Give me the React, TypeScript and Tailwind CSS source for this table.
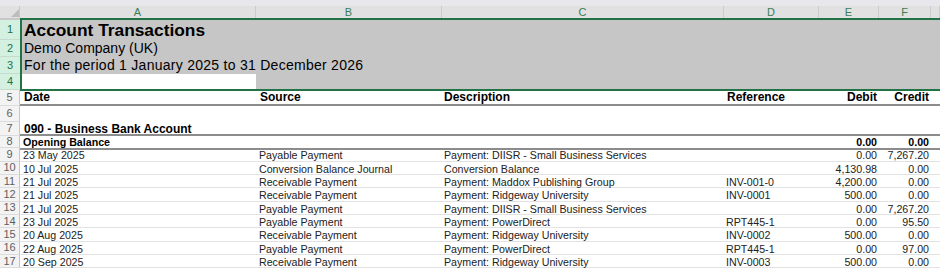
type Txn = {
  date: string;
  source: string;
  desc: string;
  ref: string;
  debit: string;
  credit: string;
};

const txns: Txn[] = [
  { date: '23 May 2025', source: 'Payable Payment', desc: 'Payment: DIISR - Small Business Services', ref: '', debit: '0.00', credit: '7,267.20' },
  { date: '10 Jul 2025', source: 'Conversion Balance Journal', desc: 'Conversion Balance', ref: '', debit: '4,130.98', credit: '0.00' },
  { date: '21 Jul 2025', source: 'Receivable Payment', desc: 'Payment: Maddox Publishing Group', ref: 'INV-001-0', debit: '4,200.00', credit: '0.00' },
  { date: '21 Jul 2025', source: 'Receivable Payment', desc: 'Payment: Ridgeway University', ref: 'INV-0001', debit: '500.00', credit: '0.00' },
  { date: '21 Jul 2025', source: 'Payable Payment', desc: 'Payment: DIISR - Small Business Services', ref: '', debit: '0.00', credit: '7,267.20' },
  { date: '23 Jul 2025', source: 'Payable Payment', desc: 'Payment: PowerDirect', ref: 'RPT445-1', debit: '0.00', credit: '95.50' },
  { date: '20 Aug 2025', source: 'Receivable Payment', desc: 'Payment: Ridgeway University', ref: 'INV-0002', debit: '500.00', credit: '0.00' },
  { date: '22 Aug 2025', source: 'Payable Payment', desc: 'Payment: PowerDirect', ref: 'RPT445-1', debit: '0.00', credit: '97.00' },
  { date: '20 Sep 2025', source: 'Receivable Payment', desc: 'Payment: Ridgeway University', ref: 'INV-0003', debit: '500.00', credit: '0.00' },
];

const letters = ['A', 'B', 'C', 'D', 'E', 'F', ''];

function RowHead({ n, sel }: { n: number; sel?: boolean }) {
  return (
    <div
      className={
        sel
          ? 'w-[20px] shrink-0 flex items-center justify-center bg-[#d3f0e0] text-[#217346] border-b border-[#c3dccb] text-[11px] leading-none'
          : 'w-[20px] shrink-0 flex items-center justify-center bg-[#f3f3f3] text-[#5f5f5f] border-b border-r border-[#dcdcdc] border-r-[#c6c6c6] text-[11px] leading-none'
      }
    >
      {n}
    </div>
  );
}

export default function App() {
  return (
    <div className="relative w-[940px] h-[268px] overflow-hidden bg-white font-['Liberation_Sans',Arial,sans-serif]">
      {/* top strip */}
      <div className="h-[6px] bg-[#e8e8ec]" />

      {/* column letters */}
      <div className="flex h-[14px] bg-[#e1e1e1]">
        <div className="w-[20px] shrink-0 relative border-b-2 border-r border-[#c8c8c8]">
          <svg className="absolute left-[11px] top-[3px]" width="8" height="8" viewBox="0 0 8 8">
            <polygon points="8,0 8,8 0,8" fill="#bdbdbd" />
          </svg>
        </div>
        <div className="flex-1 grid grid-cols-[236px_186px_282px_95px_60px_52px_1fr] border-b-2 border-[#217346]">
          {letters.map((l, i) => (
            <div
              key={i}
              className="flex items-center justify-center border-r border-[#cbcbcb] text-[11px] leading-none text-[#3b7d55]"
            >
              {l}
            </div>
          ))}
        </div>
      </div>

      {/* rows 1-3 : title block */}
      <div className="flex h-[20px]">
        <RowHead n={1} sel />
        <div className="flex-1 bg-[#c6c6c6] pl-[4px] text-[17.33px] leading-[20px] font-bold text-black whitespace-nowrap">
          Account Transactions
        </div>
      </div>
      <div className="flex h-[17px]">
        <RowHead n={2} sel />
        <div className="flex-1 bg-[#c6c6c6] pl-[4px] text-[14px] leading-[17px] text-black whitespace-nowrap">
          Demo Company (UK)
        </div>
      </div>
      <div className="flex h-[17px]">
        <RowHead n={3} sel />
        <div className="flex-1 bg-[#c6c6c6] pl-[4px] text-[14px] leading-[17px] tracking-[0.27px] text-black whitespace-nowrap">
          For the period 1 January 2025 to 31 December 2026
        </div>
      </div>
      <div className="flex h-[16px]">
        <RowHead n={4} sel />
        <div className="flex-1 grid grid-cols-[236px_1fr]">
          <div className="bg-white" />
          <div className="bg-[#c6c6c6]" />
        </div>
      </div>

      {/* row 5 : column titles */}
      <div className="flex h-[16px]">
        <RowHead n={5} />
        <div className="flex-1 grid grid-cols-[236px_186px_282px_95px_60px_52px_1fr] border-b-2 border-[#8c8c8c] text-[12px] leading-[14px] font-bold text-black whitespace-nowrap">
          <div className="pl-[4px]">Date</div>
          <div className="pl-[4px]">Source</div>
          <div className="pl-[2px]">Description</div>
          <div className="pl-[3px]">Reference</div>
          <div className="pr-[2px] text-right">Debit</div>
          <div className="pr-[2px] text-right">Credit</div>
          <div />
        </div>
      </div>

      {/* row 6 : blank */}
      <div className="flex h-[16px]">
        <RowHead n={6} />
        <div className="flex-1" />
      </div>

      {/* row 7 : account name */}
      <div className="flex h-[14px]">
        <RowHead n={7} />
        <div className="flex-1 border-b-2 border-[#8c8c8c] pl-[4px] pt-[1px] text-[12px] leading-[12px] font-bold text-black whitespace-nowrap">
          090 - Business Bank Account
        </div>
      </div>

      {/* row 8 : opening balance */}
      <div className="flex h-[12.33px]">
        <RowHead n={8} />
        <div className="flex-1 grid grid-cols-[236px_186px_282px_95px_60px_52px_1fr] text-[10.67px] leading-[13px] font-bold text-black whitespace-nowrap">
          <div className="pl-[3px]">Opening Balance</div>
          <div />
          <div />
          <div />
          <div className="pr-[2px] text-right">0.00</div>
          <div className="pr-[2px] text-right">0.00</div>
          <div />
        </div>
      </div>

      {/* transactions */}
      {txns.map((t, i) => (
        <div key={i} className="flex h-[13.33px]">
          <RowHead n={9 + i} />
          <div
            className={
              i === 0
                ? 'flex-1 grid grid-cols-[236px_186px_282px_95px_60px_52px_1fr] border-t-2 border-b border-[#e2e2e2] border-t-[#8c8c8c] text-[10.67px] leading-[11px] text-[#222] whitespace-nowrap'
                : 'flex-1 grid grid-cols-[236px_186px_282px_95px_60px_52px_1fr] border-b border-[#e2e2e2] text-[10.67px] leading-[14px] text-[#222] whitespace-nowrap'
            }
          >
            <div className="pl-[3px]">{t.date}</div>
            <div className="pl-[3px]">{t.source}</div>
            <div className="pl-[2px]">{t.desc}</div>
            <div className="pl-[2px]">{t.ref}</div>
            <div className="pr-[2px] text-right">{t.debit}</div>
            <div className="pr-[2px] text-right">{t.credit}</div>
            <div />
          </div>
        </div>
      ))}

      {/* selection outline A1:F4 */}
      <div className="absolute left-[20px] top-[18px] w-[930px] h-[73px] border-2 border-[#217346] pointer-events-none" />
    </div>
  );
}
